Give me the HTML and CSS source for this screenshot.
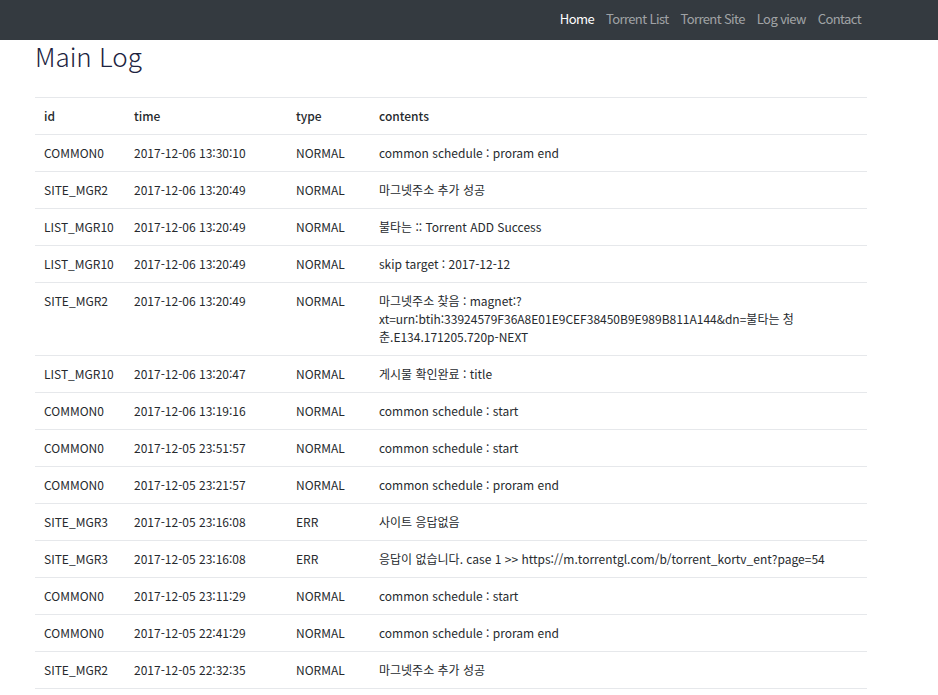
FILE: index.html
```html
<!DOCTYPE html>
<html lang="ko">
<head>
<meta charset="utf-8">
<title>Main Log</title>
<link rel="stylesheet" href="styles.css">
</head>
<body>
<nav class="navbar">
  <ul class="nav">
    <li><a class="nav-link active" href="#">Home</a></li>
    <li><a class="nav-link" href="#">Torrent List</a></li>
    <li><a class="nav-link" href="#">Torrent Site</a></li>
    <li><a class="nav-link" href="#">Log view</a></li>
    <li><a class="nav-link" href="#">Contact</a></li>
  </ul>
</nav>
<main class="container">
  <h1 class="title">Main Log</h1>
  <table class="log-table">
    <thead>
      <tr><th class="c-id">id</th><th class="c-time">time</th><th class="c-type">type</th><th>contents</th></tr>
    </thead>
    <tbody>
      <tr><td>COMMON0</td><td>2017-12-06 13:30:10</td><td>NORMAL</td><td>common schedule : proram end</td></tr>
      <tr><td>SITE_MGR2</td><td>2017-12-06 13:20:49</td><td>NORMAL</td><td>마그넷주소 추가 성공</td></tr>
      <tr><td>LIST_MGR10</td><td>2017-12-06 13:20:49</td><td>NORMAL</td><td>불타는 :: Torrent ADD Success</td></tr>
      <tr><td>LIST_MGR10</td><td>2017-12-06 13:20:49</td><td>NORMAL</td><td>skip target : 2017-12-12</td></tr>
      <tr><td>SITE_MGR2</td><td>2017-12-06 13:20:49</td><td>NORMAL</td><td><span class="line">마그넷주소 찾음 : magnet:?</span><span class="line">xt=urn:btih:33924579F36A8E01E9CEF38450B9E989B811A144&amp;dn=불타는 청</span><span class="line">춘.E134.171205.720p-NEXT</span></td></tr>
      <tr><td>LIST_MGR10</td><td>2017-12-06 13:20:47</td><td>NORMAL</td><td>게시물 확인완료 : title</td></tr>
      <tr><td>COMMON0</td><td>2017-12-06 13:19:16</td><td>NORMAL</td><td>common schedule : start</td></tr>
      <tr><td>COMMON0</td><td>2017-12-05 23:51:57</td><td>NORMAL</td><td>common schedule : start</td></tr>
      <tr><td>COMMON0</td><td>2017-12-05 23:21:57</td><td>NORMAL</td><td>common schedule : proram end</td></tr>
      <tr><td>SITE_MGR3</td><td>2017-12-05 23:16:08</td><td>ERR</td><td>사이트 응답없음</td></tr>
      <tr><td>SITE_MGR3</td><td>2017-12-05 23:16:08</td><td>ERR</td><td>응답이 없습니다. case 1 &gt;&gt; https://m.torrentgl.com/b/torrent_kortv_ent?page=54</td></tr>
      <tr><td>COMMON0</td><td>2017-12-05 23:11:29</td><td>NORMAL</td><td>common schedule : start</td></tr>
      <tr><td>COMMON0</td><td>2017-12-05 22:41:29</td><td>NORMAL</td><td>common schedule : proram end</td></tr>
      <tr><td>SITE_MGR2</td><td>2017-12-05 22:32:35</td><td>NORMAL</td><td>마그넷주소 추가 성공</td></tr>
    </tbody>
  </table>
</main>
</body>
</html>
```

FILE: styles.css
```css
* { box-sizing: border-box; }
html, body { margin: 0; padding: 0; }
body {
  font-family: "Noto Sans CJK KR", "Noto Sans", sans-serif;
  font-size: 12px;
  color: #262a2e;
  background: #fff;
}
.navbar {
  background: #343a40;
  height: 40px;
  display: flex;
  justify-content: flex-end;
  align-items: center;
  padding-right: 71px;
}
.nav {
  list-style: none;
  margin: 0;
  padding: 0;
  display: flex;
}
.nav-link {
  display: block;
  padding: 0 6px;
  font-size: 13px;
  letter-spacing: -0.6px;
  line-height: 38px;
  padding-bottom: 2px;
  color: rgba(255,255,255,0.55);
  text-decoration: none;
}
.nav-link.active { color: #fff; }
.container {
  margin: 0 71px 0 35px;
}
.title {
  margin: 0;
  height: 57px;
  font-size: 26px;
  font-weight: 300;
  line-height: 32px;
  color: #1c2340;
}
.log-table {
  width: 100%;
  border-collapse: collapse;
}
.log-table th, .log-table td {
  text-align: left;
  vertical-align: top;
  padding: 9px 9px;
  line-height: 18px;
  border-top: 1px solid #e6e8eb;
  white-space: nowrap;
}
.log-table tbody tr:last-child td { border-bottom: 1px solid #e6e8eb; }
.log-table th { font-weight: 500; }
.c-id { width: 90px; }
.c-time { width: 162px; }
.c-type { width: 83px; }
.line { display: block; }
```
